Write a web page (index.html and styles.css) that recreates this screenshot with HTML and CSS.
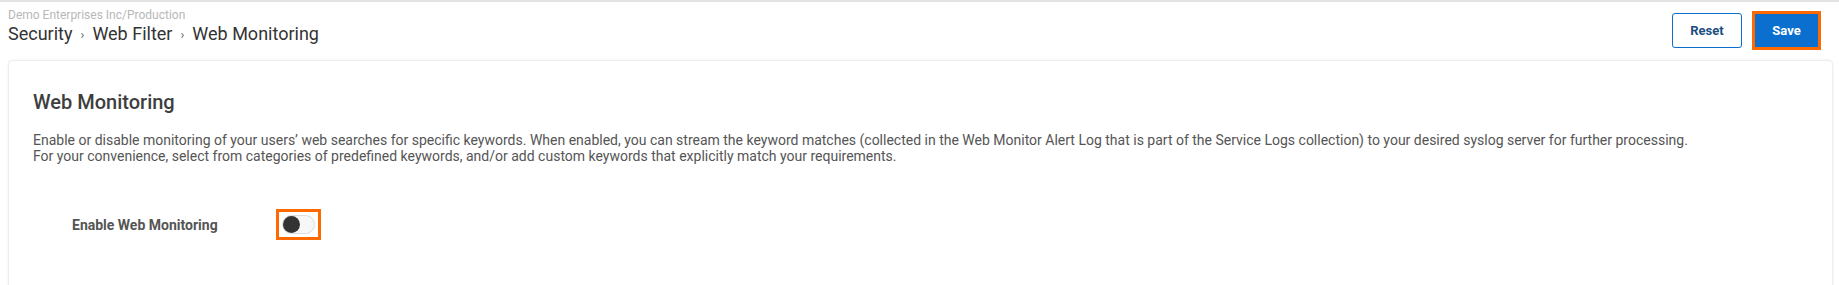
FILE: index.html
```html
<!DOCTYPE html>
<html lang="en">
<head>
<meta charset="utf-8">
<title>Web Monitoring</title>
<link rel="stylesheet" href="styles.css">
</head>
<body>
<div class="page">
  <header class="topbar">
    <div class="crumbs">
      <div class="org">Demo Enterprises Inc/Production</div>
      <div class="path">
        <span class="crumb">Security</span>
        <span class="sep">›</span>
        <span class="crumb">Web Filter</span>
        <span class="sep">›</span>
        <span class="crumb">Web Monitoring</span>
      </div>
    </div>
    <div class="actions">
      <button class="btn btn-reset" type="button">Reset</button>
      <span class="highlight highlight-btn"><button class="btn btn-save" type="button">Save</button></span>
    </div>
  </header>
  <section class="card">
    <h2 class="card-title">Web Monitoring</h2>
    <p class="desc">Enable or disable monitoring of your users’ web searches for specific keywords. When enabled, you can stream the keyword matches (collected in the Web Monitor Alert Log that is part of the Service Logs collection) to your desired syslog server for further processing.<br>For your convenience, select from categories of predefined keywords, and/or add custom keywords that explicitly match your requirements.</p>
    <div class="field">
      <label class="field-label">Enable Web Monitoring</label>
      <span class="highlight highlight-toggle">
        <span class="toggle"><span class="knob"></span></span>
      </span>
    </div>
  </section>
</div>
</body>
</html>
```

FILE: styles.css
```css
html, body {
  margin: 0;
  padding: 0;
  background: #ffffff;
}
body {
  font-family: Roboto, "Liberation Sans", Arial, sans-serif;
  color: #333;
}
.page {
  border-top: 2px solid #e3e3e3;
  height: 283px;
  overflow: hidden;
}
.topbar {
  display: flex;
  justify-content: space-between;
  align-items: flex-start;
  padding: 0 18px 0 8px;
  height: 58px;
}
.crumbs {
  padding-top: 6px;
}
.org {
  font-size: 12px;
  line-height: 14px;
  color: #b8b8b8;
}
.path {
  display: flex;
  align-items: center;
  gap: 6px;
  font-size: 18px;
  line-height: 22px;
  color: #333;
  margin-top: 1px;
}
.sep {
  font-size: 13px;
  line-height: 13px;
  color: #666;
  padding: 0 2px;
}
.actions {
  display: flex;
  align-items: center;
  gap: 10px;
  padding-top: 9px;
}
.btn {
  font-family: Roboto, "Liberation Sans", Arial, sans-serif;
  font-size: 13px;
  font-weight: 700;
  border-radius: 3px;
  cursor: pointer;
  padding: 0;
}
.btn-reset {
  width: 70px;
  height: 35px;
  background: #fff;
  border: 1px solid #0a6fcf;
  color: #1b4f80;
}
.highlight {
  display: inline-flex;
  border: 3px solid #ff6a00;
}
.btn-save {
  width: 63px;
  height: 33px;
  background: #0a6fcf;
  border: none;
  border-radius: 0;
  color: #fff;
}
.card {
  margin: 0 6px 0 8px;
  border: 1px solid #ededed;
  border-radius: 4px;
  box-shadow: 0 0 3px rgba(0, 0, 0, 0.06);
  padding: 29px 24px 40px;
  min-height: 240px;
}
.card-title {
  margin: 0 0 18px;
  font-size: 20px;
  line-height: 24px;
  font-weight: 500;
  color: #3e3e3e;
}
.desc {
  margin: 0;
  font-size: 14px;
  line-height: 16px;
  color: #555;
}
.field {
  display: flex;
  align-items: center;
  margin-top: 45px;
  padding-left: 39px;
}
.field-label {
  width: 204px;
  font-size: 14px;
  font-weight: 700;
  color: #555;
}
.highlight-toggle {
  padding: 3px;
}
.toggle {
  display: inline-block;
  box-sizing: border-box;
  width: 33px;
  height: 19px;
  border: 1px solid #dcdcdc;
  border-radius: 10px;
  background: #f7f7f7;
  position: relative;
}
.knob {
  position: absolute;
  left: 0;
  top: 0;
  width: 17px;
  height: 17px;
  border-radius: 50%;
  background: #333;
}
```
